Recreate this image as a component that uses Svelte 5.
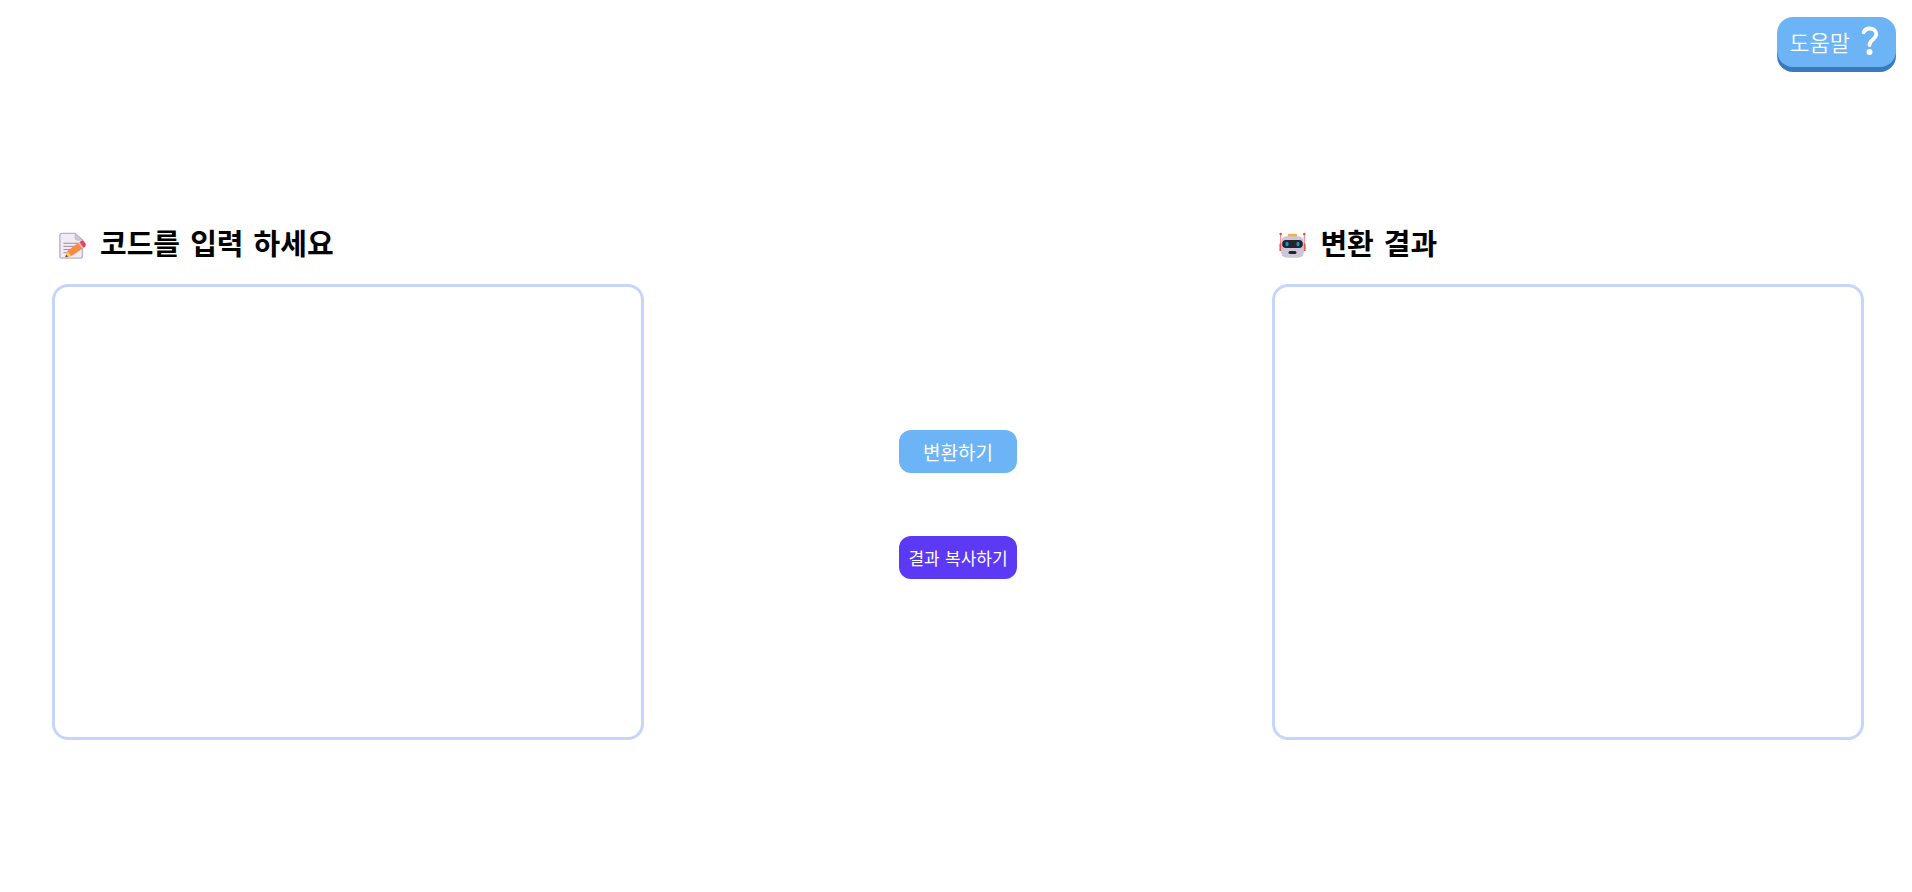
<script>
  let code = $state('');
  let result = $state('');

  function convert() {
    result = code.trim();
  }

  function copyResult() {
    navigator.clipboard?.writeText(result);
  }
</script>

<svelte:head>
  <title>코드 변환</title>
</svelte:head>

<header class="top-bar">
  <button type="button" class="help-button">
    <span class="help-text">도움말</span>
    <svg class="help-icon" viewBox="0 0 18 30" aria-hidden="true">
      <path d="M2.7 6.3C3.6 3.7 5.8 2.5 8.7 2.5C12.2 2.5 15.3 4.6 15.3 8.1C15.3 10.8 13.4 12.3 11.5 13.9C9.5 15.6 8.5 16.8 8.5 19" fill="none" stroke="#fff" stroke-width="3.8" stroke-linecap="round" />
      <circle cx="8.5" cy="26" r="3" fill="#fff" />
    </svg>
  </button>
</header>

<main class="converter">
  <section class="panel">
    <label class="panel-title" for="code-input">
      <svg class="title-icon" viewBox="2 1 30 30" aria-hidden="true">
        <path d="M5 2.5H20L28 10V28Q28 30 26 30H5Q3 30 3 28V4.5Q3 2.5 5 2.5Z" fill="#f0ebf5" stroke="#bdb4c9" stroke-width="1.6" />
        <path d="M20 2.5V8Q20 10 22 10H28Z" fill="#cdc4d6" stroke="#bdb4c9" stroke-width="1" />
        <path d="M7 13.5H23M7 17H22M7 20.5H18M7 24H12" fill="none" stroke="#998ea4" stroke-width="1.1" />
        <path d="M9 28.8L11.3 22L23.5 13L28 19.5L15.7 27.8Z" fill="#f98b43" />
        <path d="M9 29L11.3 22L15.7 27.8Z" fill="#fcc75b" />
        <path d="M9 29L10 26.2L12 28.4Z" fill="#493b40" />
        <path d="M23.5 13L26 11.3L30.4 17.8L28 19.5Z" fill="#c9bdce" />
        <path d="M25 12.2L27.4 10.8Q29 10 30.3 12L31.4 13.8Q32.4 15.7 31 17L29.3 18.5Z" fill="#ef3e5a" />
      </svg>
      코드를 입력 하세요
    </label>
    <textarea id="code-input" class="code-box" spellcheck="false" bind:value={code}></textarea>
  </section>

  <div class="actions">
    <button type="button" class="convert-button" onclick={convert}>변환하기</button>
    <button type="button" class="copy-button" onclick={copyResult}>결과 복사하기</button>
  </div>

  <section class="panel">
    <label class="panel-title" for="code-result">
      <svg class="title-icon" viewBox="0 1 32 31" aria-hidden="true">
        <path d="M2 3V16M30 3V16" stroke="#f58b8b" stroke-width="1.4" />
        <circle cx="2" cy="2.8" r="1.5" fill="#e84650" />
        <circle cx="30" cy="2.8" r="1.5" fill="#e84650" />
        <path d="M1 14Q0.5 14 0.5 16V23H4V13ZM31 14Q31.5 14 31.5 16V23H28V13Z" fill="#ea5657" />
        <path d="M10.5 6.5V4Q10.5 2.5 12 2.5H20Q21.5 2.5 21.5 4V6.5Z" fill="#f5ae48" />
        <path d="M9 5.5H23Q29.5 6 29.5 13V24Q29.5 31 22 31H10Q2.5 31 2.5 24V13Q2.5 6 9 5.5Z" fill="#cdc5d8" />
        <rect x="3.8" y="10" width="24.4" height="9.5" rx="4.5" fill="#24252a" />
        <ellipse cx="9.5" cy="14.8" rx="1.9" ry="2.8" fill="#218bd8" />
        <ellipse cx="22.5" cy="14.8" rx="1.9" ry="2.8" fill="#218bd8" />
        <rect x="11.3" y="23" width="9.4" height="3.6" rx="1.8" fill="#24252a" />
      </svg>
      변환 결과
    </label>
    <textarea id="code-result" class="code-box" spellcheck="false" readonly value={result}></textarea>
  </section>
</main>

<style>
  :global(body) {
    background-color: #fff;
    font-family: "DejaVu Sans", "Noto Sans CJK KR", sans-serif;
  }

  button {
    border: none;
    color: #fff;
    font-family: inherit;
    cursor: pointer;
  }

  .top-bar {
    display: flex;
    justify-content: flex-end;
    padding: 17px 16px 0;
  }

  .help-button {
    display: flex;
    align-items: center;
    gap: 11px;
    height: 50px;
    padding: 0 17px 2px 12px;
    border-radius: 16px;
    background-color: #6cb4f5;
    box-shadow: 0 5px 0 #397abe;
    font-family: "Noto Sans CJK KR", sans-serif;
    font-size: 22px;
    font-weight: 350;
  }

  .help-text {
    line-height: 32px;
  }

  .help-icon {
    width: 18px;
    height: 30px;
  }

  .converter {
    display: flex;
    justify-content: space-between;
    align-items: center;
    padding: 158px 48px 48px 52px;
  }

  .panel {
    display: flex;
    flex-direction: column;
    gap: 18px;
    width: 32.65%;
  }

  .panel-title {
    display: flex;
    align-items: center;
    gap: 14px;
    padding-left: 7px;
    color: #000;
    font-size: 29px;
    font-weight: 700;
    line-height: 41px;
  }

  .title-icon {
    width: 27px;
    height: 27px;
  }

  .code-box {
    box-sizing: border-box;
    width: 100%;
    height: 456px;
    padding: 16px;
    border: 3px solid #c6d5fb;
    border-radius: 16px;
    background-color: #fff;
    font-family: "Liberation Mono", "Noto Sans CJK KR", monospace;
    font-size: 16px;
    resize: none;
    outline: none;
  }

  .code-box:focus {
    border-color: #6cb4f5;
  }

  .actions {
    display: flex;
    flex-direction: column;
    gap: 63px;
    padding-top: 44px;
  }

  .convert-button,
  .copy-button {
    width: 118px;
    height: 43px;
    padding: 0;
    border-radius: 12px;
    white-space: nowrap;
  }

  .convert-button {
    background-color: #6cb4f5;
    font-size: 19px;
  }

  .copy-button {
    background-color: #5c39f5;
    font-size: 17px;
  }
</style>
